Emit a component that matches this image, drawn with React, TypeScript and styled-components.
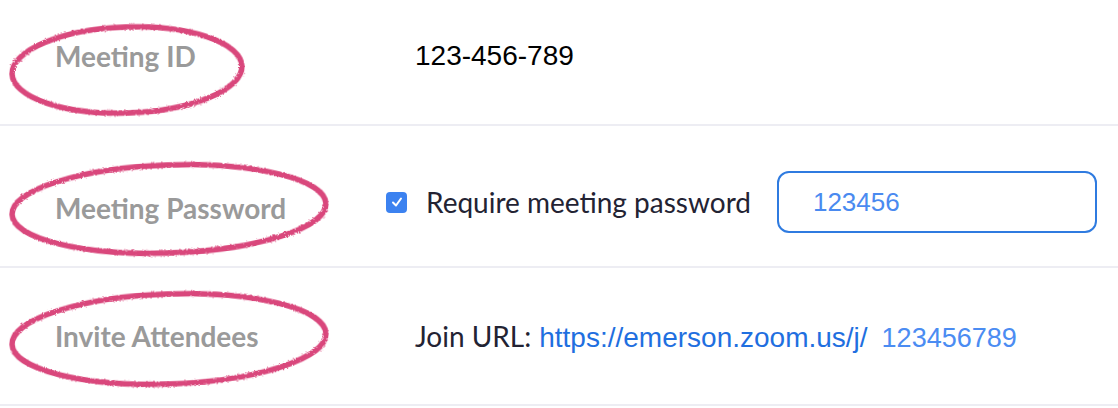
import styled, { createGlobalStyle } from "styled-components";

const GlobalStyle = createGlobalStyle`
    html, body {
        margin: 0;
        padding: 0;
        background: #ffffff;
    }
    body {
        font-family: Lato, "Noto Sans", sans-serif;
    }
`

const Page = styled.div`
    width: 1118px;
    height: 408px;
    background: #ffffff;
    overflow: hidden;
`

const Row = styled.div<{ $height: number; $shift?: number }>`
    position: relative;
    display: grid;
    grid-template-columns: 415px 1fr;
    align-items: center;
    height: ${p => p.$height}px;
    padding-bottom: ${p => Math.max(p.$shift ?? 0, 0)}px;
    padding-top: ${p => Math.max(-(p.$shift ?? 0), 0)}px;
    box-sizing: border-box;
    border-bottom: 2px solid #ededf3;
`

const Label = styled.div<{ $offset?: number }>`
    padding-left: 55px;
    font-family: Lato, sans-serif;
    font-weight: 700;
    font-size: 28px;
    color: #9a9a9a;
    position: relative;
    top: ${p => p.$offset ?? 0}px;
`

const Value = styled.div`
    font-family: "Liberation Sans", Arial, sans-serif;
    font-size: 28px;
    color: #000000;
`

const Controls = styled.div`
    display: flex;
    align-items: center;
`

const CheckBox = styled.span`
    width: 21px;
    height: 21px;
    border-radius: 4px;
    background: #3c82f0;
    display: flex;
    align-items: center;
    justify-content: center;
    margin-left: -29px;
    margin-right: 19px;
`

const CheckText = styled.span`
    font-family: Lato, sans-serif;
    font-size: 28px;
    color: #232333;
`

const PasswordBox = styled.div`
    margin-left: 26px;
    width: 320px;
    height: 62px;
    box-sizing: border-box;
    border: 2px solid #2f7be0;
    border-radius: 12px;
    display: flex;
    align-items: center;
    padding-left: 34px;
    font-family: "Liberation Sans", Arial, sans-serif;
    font-size: 26px;
    color: #4a8af0;
`

const JoinLine = styled.div`
    display: flex;
    align-items: baseline;
`

const JoinLabel = styled.span`
    font-family: Lato, sans-serif;
    font-size: 28px;
    color: #232333;
    margin-right: 8px;
`

const Link = styled.span<{ $light?: boolean }>`
    font-family: "Liberation Sans", Arial, sans-serif;
    font-size: ${p => (p.$light ? 27 : 28)}px;
    color: ${p => (p.$light ? "#4b8cf2" : "#1f6fe0")};
    margin-right: ${p => (p.$light ? 0 : 14)}px;
`

const Marker = styled.svg<{ $top: number }>`
    position: absolute;
    left: 0;
    top: ${p => p.$top}px;
    pointer-events: none;
    overflow: visible;
`

function Circle({ top, width, height }: { top: number; width: number; height: number }) {
    const cx = width / 2 + 12
    const cy = height / 2
    return (
        <Marker $top={top} width={width + 30} height={height + 10}>
            <defs>
                <filter id={`rough${top}${width}`} x="-10%" y="-20%" width="120%" height="140%">
                    <feTurbulence type="fractalNoise" baseFrequency="0.9" numOctaves="2" seed="3"/>
                    <feDisplacementMap in="SourceGraphic" scale="3"/>
                </filter>
            </defs>
            <ellipse cx={cx} cy={cy} rx={width / 2} ry={height / 2 - 2}
                     transform={`rotate(-2 ${cx} ${cy})`}
                     fill="none" stroke="#d9467b" strokeWidth={5.5}
                     filter={`url(#rough${top}${width})`}/>
        </Marker>
    )
}

export default function App() {
    return (
        <Page>
            <GlobalStyle/>
            <Row $height={126} $shift={12}>
                <Label>Meeting ID</Label>
                <Value>123-456-789</Value>
                <Circle top={25} width={230} height={90}/>
            </Row>
            <Row $height={142} $shift={-12}>
                <Label $offset={6}>Meeting Password</Label>
                <Controls>
                    <CheckBox>
                        <svg width="14" height="14" viewBox="0 0 14 14">
                            <path d="M3 7.5 L6 10.5 L11 3.5" fill="none" stroke="#ffffff" strokeWidth="2"
                                  strokeLinecap="round" strokeLinejoin="round"/>
                        </svg>
                    </CheckBox>
                    <CheckText>Require meeting password</CheckText>
                    <PasswordBox>123456</PasswordBox>
                </Controls>
                <Circle top={37} width={314} height={92}/>
            </Row>
            <Row $height={138}>
                <Label>Invite Attendees</Label>
                <JoinLine>
                    <JoinLabel>Join URL:</JoinLabel>
                    <Link>https://emerson.zoom.us/j/</Link>
                    <Link $light>123456789</Link>
                </JoinLine>
                <Circle top={24} width={314} height={94}/>
            </Row>
        </Page>
    )
}
